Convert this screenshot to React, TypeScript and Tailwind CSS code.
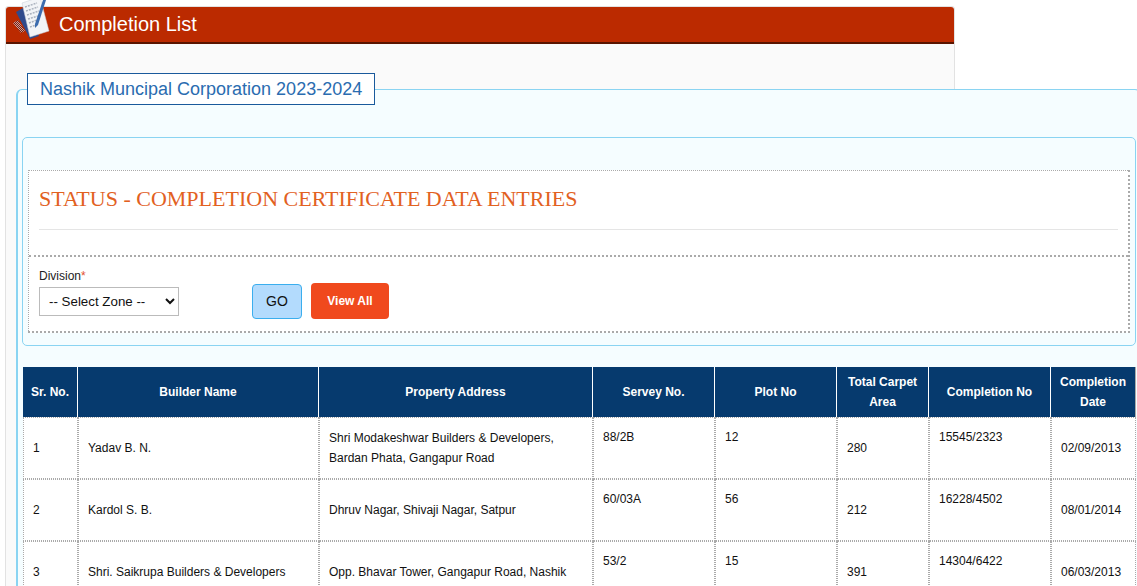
const columns = [
  { label: 'Sr. No.', width: 'w-[55px]' },
  { label: 'Builder Name', width: 'w-[241px]' },
  { label: 'Property Address', width: 'w-[274px]' },
  { label: 'Servey No.', width: 'w-[122px]' },
  { label: 'Plot No', width: 'w-[122px]' },
  { label: 'Total Carpet Area', width: 'w-[92px]' },
  { label: 'Completion No', width: 'w-[122px]' },
  { label: 'Completion Date', width: 'w-[85px]' },
];

const rows = [
  {
    sr: '1',
    builder: 'Yadav B. N.',
    address: ['Shri Modakeshwar Builders & Developers,', 'Bardan Phata, Gangapur Road'],
    survey: '88/2B',
    plot: '12',
    area: '280',
    completion: '15545/2323',
    date: '02/09/2013',
  },
  {
    sr: '2',
    builder: 'Kardol S. B.',
    address: ['Dhruv Nagar, Shivaji Nagar, Satpur'],
    survey: '60/03A',
    plot: '56',
    area: '212',
    completion: '16228/4502',
    date: '08/01/2014',
  },
  {
    sr: '3',
    builder: 'Shri. Saikrupa Builders & Developers',
    address: ['Opp. Bhavar Tower, Gangapur Road, Nashik'],
    survey: '53/2',
    plot: '15',
    area: '391',
    completion: '14304/6422',
    date: '06/03/2013',
  },
];

const NotebookIcon = () => (
  <svg className="absolute left-[7px] top-[-7px]" width="38" height="40" viewBox="0 0 38 40">
    <defs>
      <pattern id="check" width="2" height="2" patternUnits="userSpaceOnUse">
        <rect width="2" height="2" fill="#c9a59c" />
        <rect width="1" height="1" fill="#7f1d10" />
        <rect x="1" y="1" width="1" height="1" fill="#7f1d10" />
      </pattern>
    </defs>
    <path d="M3 12 L10 8 L26 36 L17 39 Z" fill="#2f4a8c" />
    <path d="M0 23 L5 20 L12 31 L8 33 Z" fill="url(#check)" />
    <path d="M9 3 L27 -3 L36 31 L17 37 Z" fill="#f2f4f7" stroke="#c9ced6" strokeWidth="0.5" />
    <path d="M12 7 L24 3 M13 11 L25 7 M14 15 L26 11 M15 19 L25 16 M16 23 L24 20 M17 27 L23 25" stroke="#a9b1bd" strokeWidth="1.5" strokeDasharray="2 1" />
    <path d="M30 0 L33 0 L25 25 L22 28 L22 24 Z" fill="#3c6cae" />
  </svg>
);

export default function App() {
  const bodyCell = 'border border-dotted border-[#aaa] px-[9px] text-[12px] leading-5 text-[#111]';

  return (
    <div className="h-[586px] overflow-hidden bg-white font-['Liberation_Sans',Arial,sans-serif]">
      <div className="ml-[5px] mt-[6px] w-[950px] min-h-[700px] rounded-t-[3px] border border-[#e2e2e2] bg-[#fafafa]">
        <header className="relative flex h-[37px] items-center rounded-t-[3px] border-b-2 border-[#5a1500] bg-[#bb2a00] pb-[2px] pl-[53px] text-[20px] text-white">
          <NotebookIcon />
          Completion List
        </header>

        <fieldset className="ml-[10px] mt-[29px] w-[1125px] rounded-t-[6px] border border-l-2 border-[#8ad4f2] bg-[#f5fdff] px-[4px] pb-[20px] pt-[32px]">
          <legend className="ml-[5px] h-[32px] border border-[#1a5a9c] bg-white px-[12px] text-[18px] leading-[30px] text-[#2a6cb0]">
            Nashik Muncipal Corporation 2023-2024
          </legend>

          <div className="rounded-[5px] border border-[#8ad4f2] px-[5px] pb-[12px] pt-[32px]">
            <div className="border-b-2 border-l border-r-2 border-t border-dotted border-[#aaa] bg-white">
              <div className="h-[86px] border-b-2 border-dotted border-[#aaa] px-[10px] pt-[14px]">
                <h2 className="border-b border-[#e5e5e5] pb-[17px] font-['Liberation_Serif','Times_New_Roman',serif] text-[22px] leading-[27px] text-[#e2611f]">
                  STATUS - COMPLETION CERTIFICATE DATA ENTRIES
                </h2>
              </div>
              <div className="flex h-[74px] items-start px-[10px] pt-[12px]">
                <div className="w-[213px]">
                  <label className="block text-[12px] leading-[14px] text-[#222]">
                    Division<span className="text-[#e2512f]">*</span>
                  </label>
                  <select className="mt-[4px] h-[29px] w-[140px] border border-[#bbb] bg-white pl-[5px] text-[13.33px] text-[#111]">
                    <option>-- Select Zone --</option>
                  </select>
                </div>
                <button className="mt-[15px] h-[35px] w-[50px] rounded-[4px] border border-[#3aaeee] bg-[#b3dbfd] text-[14px] text-[#111]">
                  GO
                </button>
                <button className="ml-[9px] mt-[14px] h-[36px] w-[78px] rounded-[4px] bg-[#f0491d] text-[12px] font-bold text-white">
                  View All
                </button>
              </div>
            </div>
          </div>

          <table className="ml-[1px] mt-[21px] w-[1113px] table-fixed border-separate border-spacing-0">
            <thead>
              <tr className="h-[50px] bg-[#063a6e] text-[12px] font-bold leading-5 text-white">
                {columns.map((col) => (
                  <th key={col.label} className={`${col.width} border-r border-white px-[8px] last:border-r-[#aaa]`}>
                    {col.label}
                  </th>
                ))}
              </tr>
            </thead>
            <tbody>
              {rows.map((row) => (
                <tr key={row.sr} className="h-[62px] bg-white">
                  <td className={bodyCell}>{row.sr}</td>
                  <td className={bodyCell}>{row.builder}</td>
                  <td className={bodyCell}>
                    {row.address.map((line) => (
                      <div key={line}>{line}</div>
                    ))}
                  </td>
                  <td className={`${bodyCell} pt-[9px] align-top`}>{row.survey}</td>
                  <td className={`${bodyCell} pt-[9px] align-top`}>{row.plot}</td>
                  <td className={bodyCell}>{row.area}</td>
                  <td className={`${bodyCell} pt-[9px] align-top`}>{row.completion}</td>
                  <td className={bodyCell}>{row.date}</td>
                </tr>
              ))}
            </tbody>
          </table>
        </fieldset>
      </div>
    </div>
  );
}
